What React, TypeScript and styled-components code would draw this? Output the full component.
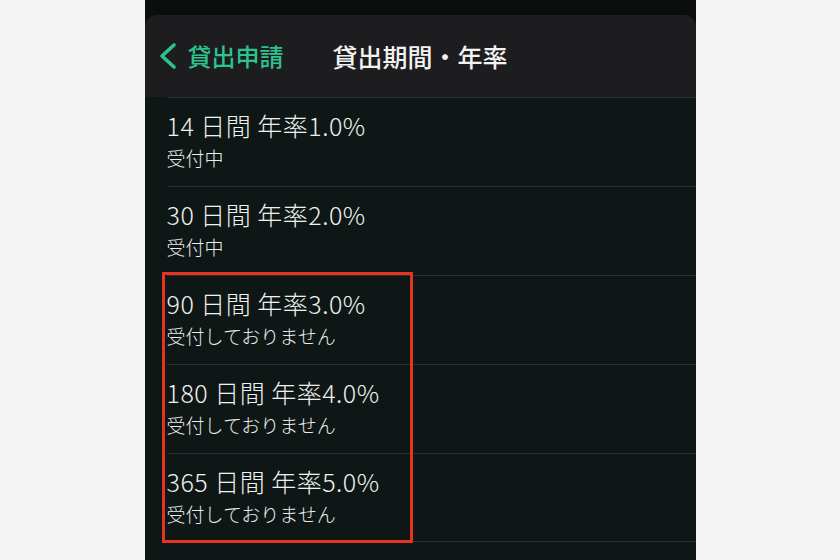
import React from "react";
import styled, { createGlobalStyle } from "styled-components";

const Global = createGlobalStyle`
  html, body { margin: 0; padding: 0; background: #f4f4f4; }
  body { font-family: "Noto Sans CJK JP", "Noto Sans", sans-serif; }
`;

const Page = styled.div`
  width: 840px;
  height: 560px;
  display: flex;
  justify-content: center;
  background: #f4f4f4;
  overflow: hidden;
`;

const Phone = styled.div`
  width: 551px;
  height: 560px;
  background: #0b0e0d;
  padding-top: 15px;
  box-sizing: border-box;
  display: flex;
  flex-direction: column;
  overflow: hidden;
`;

const Sheet = styled.div`
  flex: 1;
  display: flex;
  flex-direction: column;
  background: #0e1715;
  border-radius: 12px 12px 0 0;
  overflow: hidden;
`;

const Header = styled.header`
  height: 82px;
  background: #1d1d1f;
  display: flex;
  align-items: center;
  padding-left: 12px;
  box-sizing: border-box;
`;

const BackButton = styled.div`
  display: flex;
  align-items: center;
  gap: 11px;
  color: #2cc38f;
  font-size: 24px;
  font-weight: 500;
  width: 176px;
  line-height: 30px;
`;

const Title = styled.h1`
  margin: 0;
  color: #f2f2f2;
  font-size: 25px;
  font-weight: 500;
  line-height: 30px;
`;

const List = styled.div`
  display: flex;
  flex-direction: column;
`;

const Group = styled.div<{ $highlight?: boolean }>`
  position: relative;
  display: flex;
  flex-direction: column;
  ${({ $highlight }) =>
    $highlight &&
    `
    &::after {
      content: "";
      position: absolute;
      left: 17px;
      top: -3px;
      width: 251px;
      bottom: -1px;
      border: 3px solid #e6321e;
      box-sizing: border-box;
      pointer-events: none;
    }
  `}
`;

const Row = styled.div<{ $last?: boolean }>`
  margin-left: 22px;
  height: 89px;
  box-sizing: border-box;
  border-top: 1px solid #27302e;
  border-bottom: ${({ $last }) => ($last ? "1px solid #27302e" : "none")};
  padding-top: 12px;
  display: flex;
  flex-direction: column;
`;

const RowTitle = styled.div`
  color: #f0f0f0;
  font-size: 25px;
  line-height: 30px;
  font-weight: 300;
  letter-spacing: 0.5px;
`;

const RowSub = styled.div`
  margin-top: 5px;
  color: #ececec;
  font-size: 19px;
  line-height: 26px;
  font-weight: 300;
`;

const Chevron = () => (
  <svg width="20" height="30" viewBox="0 0 20 30" fill="none">
    <path
      d="M17 4 L5 15 L17 26"
      stroke="#2cc38f"
      strokeWidth="3.6"
      strokeLinecap="round"
      strokeLinejoin="round"
    />
  </svg>
);

type Item = { days: string; rate: string; status: string };

const open: Item[] = [
  { days: "14", rate: "1.0", status: "受付中" },
  { days: "30", rate: "2.0", status: "受付中" },
];
const closed: Item[] = [
  { days: "90", rate: "3.0", status: "受付しておりません" },
  { days: "180", rate: "4.0", status: "受付しておりません" },
  { days: "365", rate: "5.0", status: "受付しておりません" },
];

const ItemRow = ({ item, last }: { item: Item; last?: boolean }) => (
  <Row $last={last}>
    <RowTitle>
      {item.days} 日間 年率{item.rate}%
    </RowTitle>
    <RowSub>{item.status}</RowSub>
  </Row>
);

export default function App() {
  return (
    <>
      <Global />
      <Page>
        <Phone>
          <Sheet>
            <Header>
              <BackButton>
                <Chevron />
                <span>貸出申請</span>
              </BackButton>
              <Title>貸出期間・年率</Title>
            </Header>
            <List>
              <Group>
                {open.map((it) => (
                  <ItemRow key={it.days} item={it} />
                ))}
              </Group>
              <Group $highlight>
                {closed.map((it, i) => (
                  <ItemRow key={it.days} item={it} last={i === closed.length - 1} />
                ))}
              </Group>
            </List>
          </Sheet>
        </Phone>
      </Page>
    </>
  );
}
